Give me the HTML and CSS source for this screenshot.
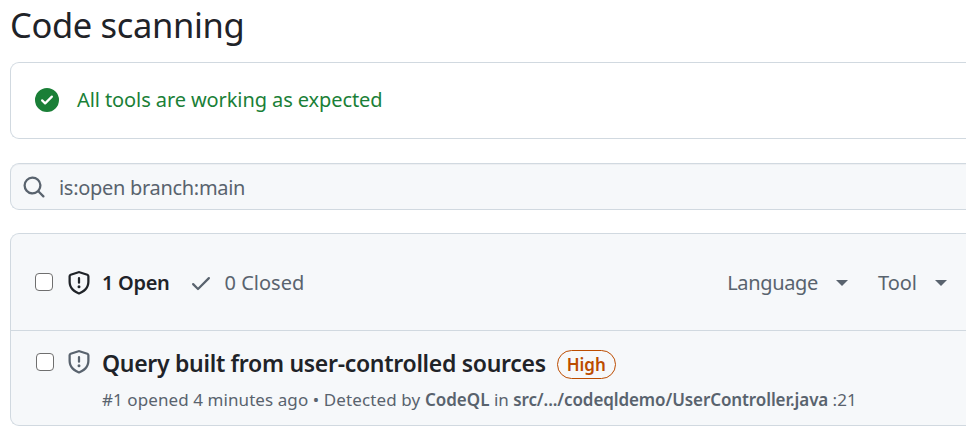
FILE: index.html
```html
<!DOCTYPE html>
<html lang="en">
<head>
<meta charset="utf-8">
<title>Code scanning</title>
<link rel="stylesheet" href="styles.css">
</head>
<body>
<svg class="defs" aria-hidden="true">
  <symbol id="shield" viewBox="0 0 16 16"><path d="M7.467.133a1.748 1.748 0 0 1 1.066 0l5.25 1.68A1.75 1.75 0 0 1 15 3.48V7c0 1.566-.32 3.182-1.303 4.682-.983 1.498-2.585 2.813-5.032 3.855a1.697 1.697 0 0 1-1.33 0c-2.447-1.042-4.049-2.357-5.032-3.855C1.32 10.182 1 8.566 1 7V3.48a1.75 1.75 0 0 1 1.217-1.667Zm.61 1.429a.25.25 0 0 0-.153 0l-5.25 1.68a.25.25 0 0 0-.174.238V7c0 1.358.275 2.666 1.057 3.86.784 1.194 2.121 2.34 4.366 3.297a.196.196 0 0 0 .154 0c2.245-.956 3.582-2.104 4.366-3.298C13.225 9.666 13.5 8.36 13.5 7V3.48a.251.251 0 0 0-.174-.237l-5.25-1.68ZM8.75 4.75v3a.75.75 0 0 1-1.5 0v-3a.75.75 0 0 1 1.5 0ZM9 10.5a1 1 0 1 1-2 0 1 1 0 0 1 2 0Z"/></symbol>
</svg>
<main class="page">
  <h1 class="title"><span>Code scanning</span></h1>

  <section class="status">
    <svg class="icon" viewBox="0 0 16 16"><path d="M8 16A8 8 0 1 1 8 0a8 8 0 0 1 0 16Zm3.78-9.72a.751.751 0 0 0-.018-1.042.751.751 0 0 0-1.042-.018L6.75 9.19 5.28 7.72a.751.751 0 0 0-1.042.018.751.751 0 0 0-.018 1.042l2 2a.75.75 0 0 0 1.06 0Z"/></svg>
    <span class="status-text">All tools are working as expected</span>
  </section>

  <div class="search">
    <svg class="icon" viewBox="0 0 16 16"><path d="M10.68 11.74a6 6 0 0 1-7.922-8.982 6 6 0 0 1 8.982 7.922l3.04 3.04a.749.749 0 0 1-.326 1.275.749.749 0 0 1-.734-.215ZM11.5 7a4.499 4.499 0 1 0-8.997 0A4.499 4.499 0 0 0 11.5 7Z"/></svg>
    <span class="query">is:open branch:main</span>
  </div>

  <section class="alerts">
    <header class="alerts-header">
      <span class="checkbox"></span>
      <a class="tab open"><svg class="icon" viewBox="0 0 16 16"><use href="#shield"/></svg><span class="open-text">1 Open</span></a>
      <a class="tab closed"><svg class="icon" viewBox="0 0 16 16"><path d="M13.78 4.22a.75.75 0 0 1 0 1.06l-7.25 7.25a.75.75 0 0 1-1.06 0L2.22 9.28a.751.751 0 0 1 .018-1.042.751.751 0 0 1 1.042-.018L6 10.94l6.72-6.72a.75.75 0 0 1 1.06 0Z"/></svg><span class="closed-text">0 Closed</span></a>
      <nav class="filters">
        <span class="filter"><span class="language">Language</span><i class="caret"></i></span>
        <span class="filter"><span class="tool">Tool</span><i class="caret"></i></span>
      </nav>
    </header>
    <article class="alert">
      <span class="checkbox"></span>
      <svg class="icon" viewBox="0 0 16 16"><use href="#shield"/></svg>
      <div class="alert-body">
        <div class="alert-heading"><span class="alert-title">Query built from user-controlled sources</span><span class="severity">High</span></div>
        <div class="meta"><span class="opened">#1 opened 4 minutes ago • </span><span class="detected">Detected by </span><b class="codeql">CodeQL</b><span class="in"> in </span><b class="path">src/.../codeqldemo/UserController.java</b><span class="line"> :21</span></div>
      </div>
    </article>
  </section>
</main>
</body>
</html>
```
FILE: styles.css
```css
* { box-sizing: border-box; }

body {
  margin: 0;
  background: #fff;
  color: #1f2328;
  font: 20px/30px "Noto Sans", "Open Sans", sans-serif;
  overflow: hidden;
}

.defs { position: absolute; width: 0; height: 0; }
.page { padding-left: 10px; }
.icon { width: 24px; height: 24px; flex: none; fill: currentColor; }

.title {
  margin: 0;
  height: 62px;
  font-size: 34.5px;
  font-weight: 400;
  line-height: 50px;
  letter-spacing: -0.35px;
}

.status, .search, .alerts {
  border: 1px solid #d1d9e0;
  border-right: 0;
  border-radius: 9px 0 0 9px;
}

.status {
  height: 77px;
  display: flex;
  align-items: center;
  gap: 18px;
  padding: 0 24px 2px;
  color: #1a7f37;
}
.status-text { letter-spacing: -0.09px; }

.search {
  height: 47px;
  margin-top: 24px;
  display: flex;
  align-items: center;
  gap: 13px;
  padding-left: 11px;
  background: #f6f8fa;
  box-shadow: inset 0 1px 0 #1f23280a;
  color: #59636e;
}
.query { letter-spacing: -0.3px; padding-top: 2px; }

.alerts {
  height: 193px;
  margin-top: 23px;
  background: #f6f8fa;
}

.checkbox {
  width: 18px;
  height: 18px;
  flex: none;
  border: 1px solid #6f6f6f;
  border-radius: 4px;
  background: #fff;
}

.alerts-header {
  height: 97px;
  display: flex;
  align-items: center;
  padding: 0 19px 0 24px;
  border-bottom: 1px solid #d1d9e0;
  color: #59636e;
}
.tab { display: flex; align-items: center; gap: 11px; }
.tab .icon { margin-top: 1px; }
.open { margin-left: 14px; color: #1f2328; font-weight: 600; }
.open-text { letter-spacing: -0.3px; padding-top: 2px; }
.closed { margin-left: 19px; gap: 12px; }
.closed-text, .language, .tool { padding-top: 2px; }
.language { letter-spacing: -0.35px; }
.filters { display: flex; gap: 30px; margin-left: auto; }
.filter { display: flex; align-items: center; gap: 18px; }
.caret {
  border: 6px solid transparent;
  border-top-color: currentColor;
  border-bottom: 0;
  margin-top: 1px;
}

.alert {
  display: flex;
  padding: 17px 0 0 25px;
  color: #59636e;
}
.alert .checkbox { margin-top: 5px; }
.alert > .icon { margin: 2px 11px 0 13px; }
.alert-heading { display: flex; align-items: center; gap: 11px; height: 33px; }
.alert-title { color: #1f2328; font-size: 23px; font-weight: 600; letter-spacing: -0.3px; padding-bottom: 3px; }
.severity {
  height: 29px;
  padding: 0 9px;
  border: 1px solid #bc4c00;
  border-radius: 15px;
  color: #bc4c00;
  font-size: 17px;
  font-weight: 600;
  line-height: 27px;
}
.meta { font-size: 17px; line-height: 27px; margin-top: 5px; white-space: pre; }
.meta b { font-weight: 600; }
.opened { letter-spacing: 0.08px; }
.detected { letter-spacing: 0.12px; }
.path { letter-spacing: -0.1px; }
```
